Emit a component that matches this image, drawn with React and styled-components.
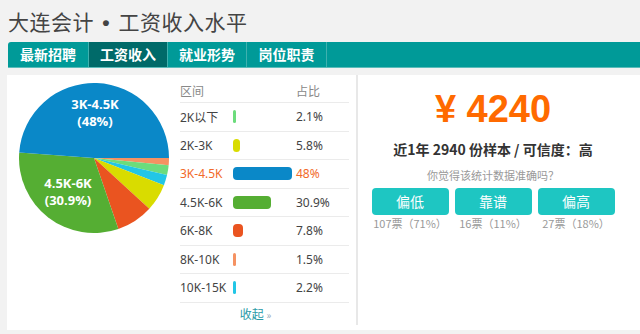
import React from 'react';
import styled, { createGlobalStyle } from 'styled-components';

const GlobalStyle = createGlobalStyle`
    html, body {
        margin: 0;
        padding: 0;
        background: #f2f2f2;
        font-family: "Noto Sans", "Noto Sans CJK SC", sans-serif;
    }
`

const Page = styled.div`
    width: 640px;
    height: 334px;
    overflow: hidden;
    display: flex;
    flex-direction: column;
`

const Title = styled.h1`
    margin: 0;
    padding: 6px 0 0 8px;
    height: 30px;
    font-family: "Noto Sans CJK SC", sans-serif;
    font-weight: 400;
    font-size: 21px;
    line-height: 30px;
    color: #444;
    letter-spacing: 0.5px;
`

const Dot = styled.span`
    font-family: "Liberation Sans", Arial, sans-serif;
    font-weight: 700;
    margin: 0 2px;
`

const TabBar = styled.div`
    margin: 6px 0 0 8px;
    height: 25px;
    display: flex;
    background-color: #009a98;
    border-bottom: 1px solid #5bbcba;
    border-top-left-radius: 3px;
`

const Tab = styled.div`
    width: ${p => p.w}px;
    line-height: 25px;
    text-align: center;
    color: #fff;
    font-family: "Noto Sans CJK SC", sans-serif;
    font-weight: 700;
    font-size: 14px;
    background-color: ${p => p.active ? '#006a69' : 'transparent'};
    border-right: 1px solid #3fb1af;
`

const Card = styled.div`
    margin: 7px 0 0 7px;
    height: 255px;
    background: #fff;
    display: flex;
`

const PieBox = styled.div`
    width: 173px;
    padding: 8px 0 0 12px;
    box-sizing: border-box;
`

const PieLabel = styled.text`
    fill: #fff;
    font-family: "Open Sans", "Noto Sans", sans-serif;
    font-weight: 700;
    font-size: 13px;
    text-anchor: middle;
    dominant-baseline: middle;
`

const TableBox = styled.div`
    width: 169px;
    padding-top: 5px;
    display: flex;
    flex-direction: column;
`

const Row = styled.div`
    display: grid;
    grid-template-columns: 53px 63px 1fr;
    align-items: center;
    height: ${p => p.head ? '22px' : '27.5px'};
    border-bottom: 1px solid #ebebeb;
    font-size: 12px;
    color: ${p => p.head ? '#888' : p.hl ? '#f26a2a' : '#444'};
    font-family: "Noto Sans", "Noto Sans CJK SC", sans-serif;
`

const Bar = styled.div`
    height: 13px;
    border-radius: 4px;
    background-color: ${p => p.color};
`

const Collapse = styled.div`
    margin-top: 2px;
    padding-right: 18px;
    text-align: center;
    font-size: 12px;
    color: #2a9aa6;
    font-family: "Noto Sans CJK SC", sans-serif;

    span {
        color: #9ab;
        font-size: 10px;
    }
`

const Divider = styled.div`
    width: 2px;
    margin-left: 7px;
    height: 250px;
    background: #e8e8e8;
`

const Right = styled.div`
    flex: 1;
    padding: 10px 12px 0 0;
    display: flex;
    flex-direction: column;
    align-items: center;
`

const Price = styled.div`
    font-family: "Liberation Sans", Arial, sans-serif;
    font-weight: 700;
    font-size: 38px;
    line-height: 48px;
    color: #ff6a00;
`

const Summary = styled.div`
    margin-top: 6px;
    font-family: "Noto Sans CJK SC", sans-serif;
    font-weight: 700;
    font-size: 14px;
    line-height: 20px;
    color: #333;
`

const Question = styled.div`
    margin-top: 9px;
    font-family: "Noto Sans CJK SC", sans-serif;
    font-size: 11px;
    line-height: 14px;
    color: #999;
`

const Votes = styled.div`
    margin-top: 6px;
    display: flex;
    gap: 6px;
`

const Vote = styled.div`
    width: 77px;
    display: flex;
    flex-direction: column;
    align-items: center;
`

const VoteButton = styled.div`
    width: 100%;
    height: 27px;
    line-height: 27px;
    text-align: center;
    border-radius: 4px;
    background-color: #1ec6c2;
    color: #fff;
    font-family: "Noto Sans CJK SC", sans-serif;
    font-size: 14px;
`

const VoteCount = styled.div`
    margin-top: 1px;
    font-family: "Noto Sans CJK SC", sans-serif;
    font-size: 11px;
    line-height: 14px;
    color: #999;
    white-space: nowrap;
`

const rows = [
    { label: '2K以下', pct: 2.1, color: '#6cdc7c' },
    { label: '2K-3K', pct: 5.8, color: '#d9dc00' },
    { label: '3K-4.5K', pct: 48, color: '#0a88c8', hl: true },
    { label: '4.5K-6K', pct: 30.9, color: '#55ae33' },
    { label: '6K-8K', pct: 7.8, color: '#ea5420' },
    { label: '8K-10K', pct: 1.5, color: '#f59262' },
    { label: '10K-15K', pct: 2.2, color: '#22c6e6' },
]

// clockwise from 3 o'clock, as in the picture
const pieOrder = ['8K-10K', '2K以下', '10K-15K', '2K-3K', '6K-8K', '4.5K-6K', '3K-4.5K']

const point = (a, r) => {
    const rad = a * Math.PI / 180
    return [75 + r * Math.sin(rad), 75 - r * Math.cos(rad)]
}

const slicePath = (a0, a1) => {
    const [x0, y0] = point(a0, 75)
    const [x1, y1] = point(a1, 75)
    const large = a1 - a0 > 180 ? 1 : 0
    return `M75 75 L${x0} ${y0} A75 75 0 ${large} 1 ${x1} ${y1} Z`
}

const Pie = () => {
    const total = rows.reduce((s, r) => s + r.pct, 0)
    let angle = 90
    const slices = pieOrder.map(name => {
        const r = rows.find(x => x.label === name)
        const a0 = angle
        angle += r.pct / total * 360
        return <path key={name} d={slicePath(a0, angle)} fill={r.color} />
    })
    return (
        <svg width="150" height="150" viewBox="0 0 150 150">
            {slices}
            <PieLabel x="76" y="23">3K-4.5K</PieLabel>
            <PieLabel x="76" y="40">(48%)</PieLabel>
            <PieLabel x="49" y="102">4.5K-6K</PieLabel>
            <PieLabel x="49" y="119">(30.9%)</PieLabel>
        </svg>
    )
}

const votes = [
    { text: '偏低', count: '107票（71%）' },
    { text: '靠谱', count: '16票（11%）' },
    { text: '偏高', count: '27票（18%）' },
]

export default function App() {
    return (
        <Page>
            <GlobalStyle />
            <Title>大连会计<Dot> • </Dot>工资收入水平</Title>
            <TabBar>
                <Tab w={80}>最新招聘</Tab>
                <Tab w={78} active>工资收入</Tab>
                <Tab w={78}>就业形势</Tab>
                <Tab w={79}>岗位职责</Tab>
            </TabBar>
            <Card>
                <PieBox>
                    <Pie />
                </PieBox>
                <TableBox>
                    <Row head>
                        <span>区间</span>
                        <span />
                        <span>占比</span>
                    </Row>
                    {rows.map(r => (
                        <Row key={r.label} hl={r.hl}>
                            <span>{r.label}</span>
                            <div>
                                <Bar color={r.color} style={{ width: Math.max(3, r.pct * 1.22) }} />
                            </div>
                            <span>{r.pct}%</span>
                        </Row>
                    ))}
                    <Collapse>收起 <span>»</span></Collapse>
                </TableBox>
                <Divider />
                <Right>
                    <Price>¥ 4240</Price>
                    <Summary>近1年 2940 份样本 / 可信度：高</Summary>
                    <Question>你觉得该统计数据准确吗？</Question>
                    <Votes>
                        {votes.map(v => (
                            <Vote key={v.text}>
                                <VoteButton>{v.text}</VoteButton>
                                <VoteCount>{v.count}</VoteCount>
                            </Vote>
                        ))}
                    </Votes>
                </Right>
            </Card>
        </Page>
    )
}
